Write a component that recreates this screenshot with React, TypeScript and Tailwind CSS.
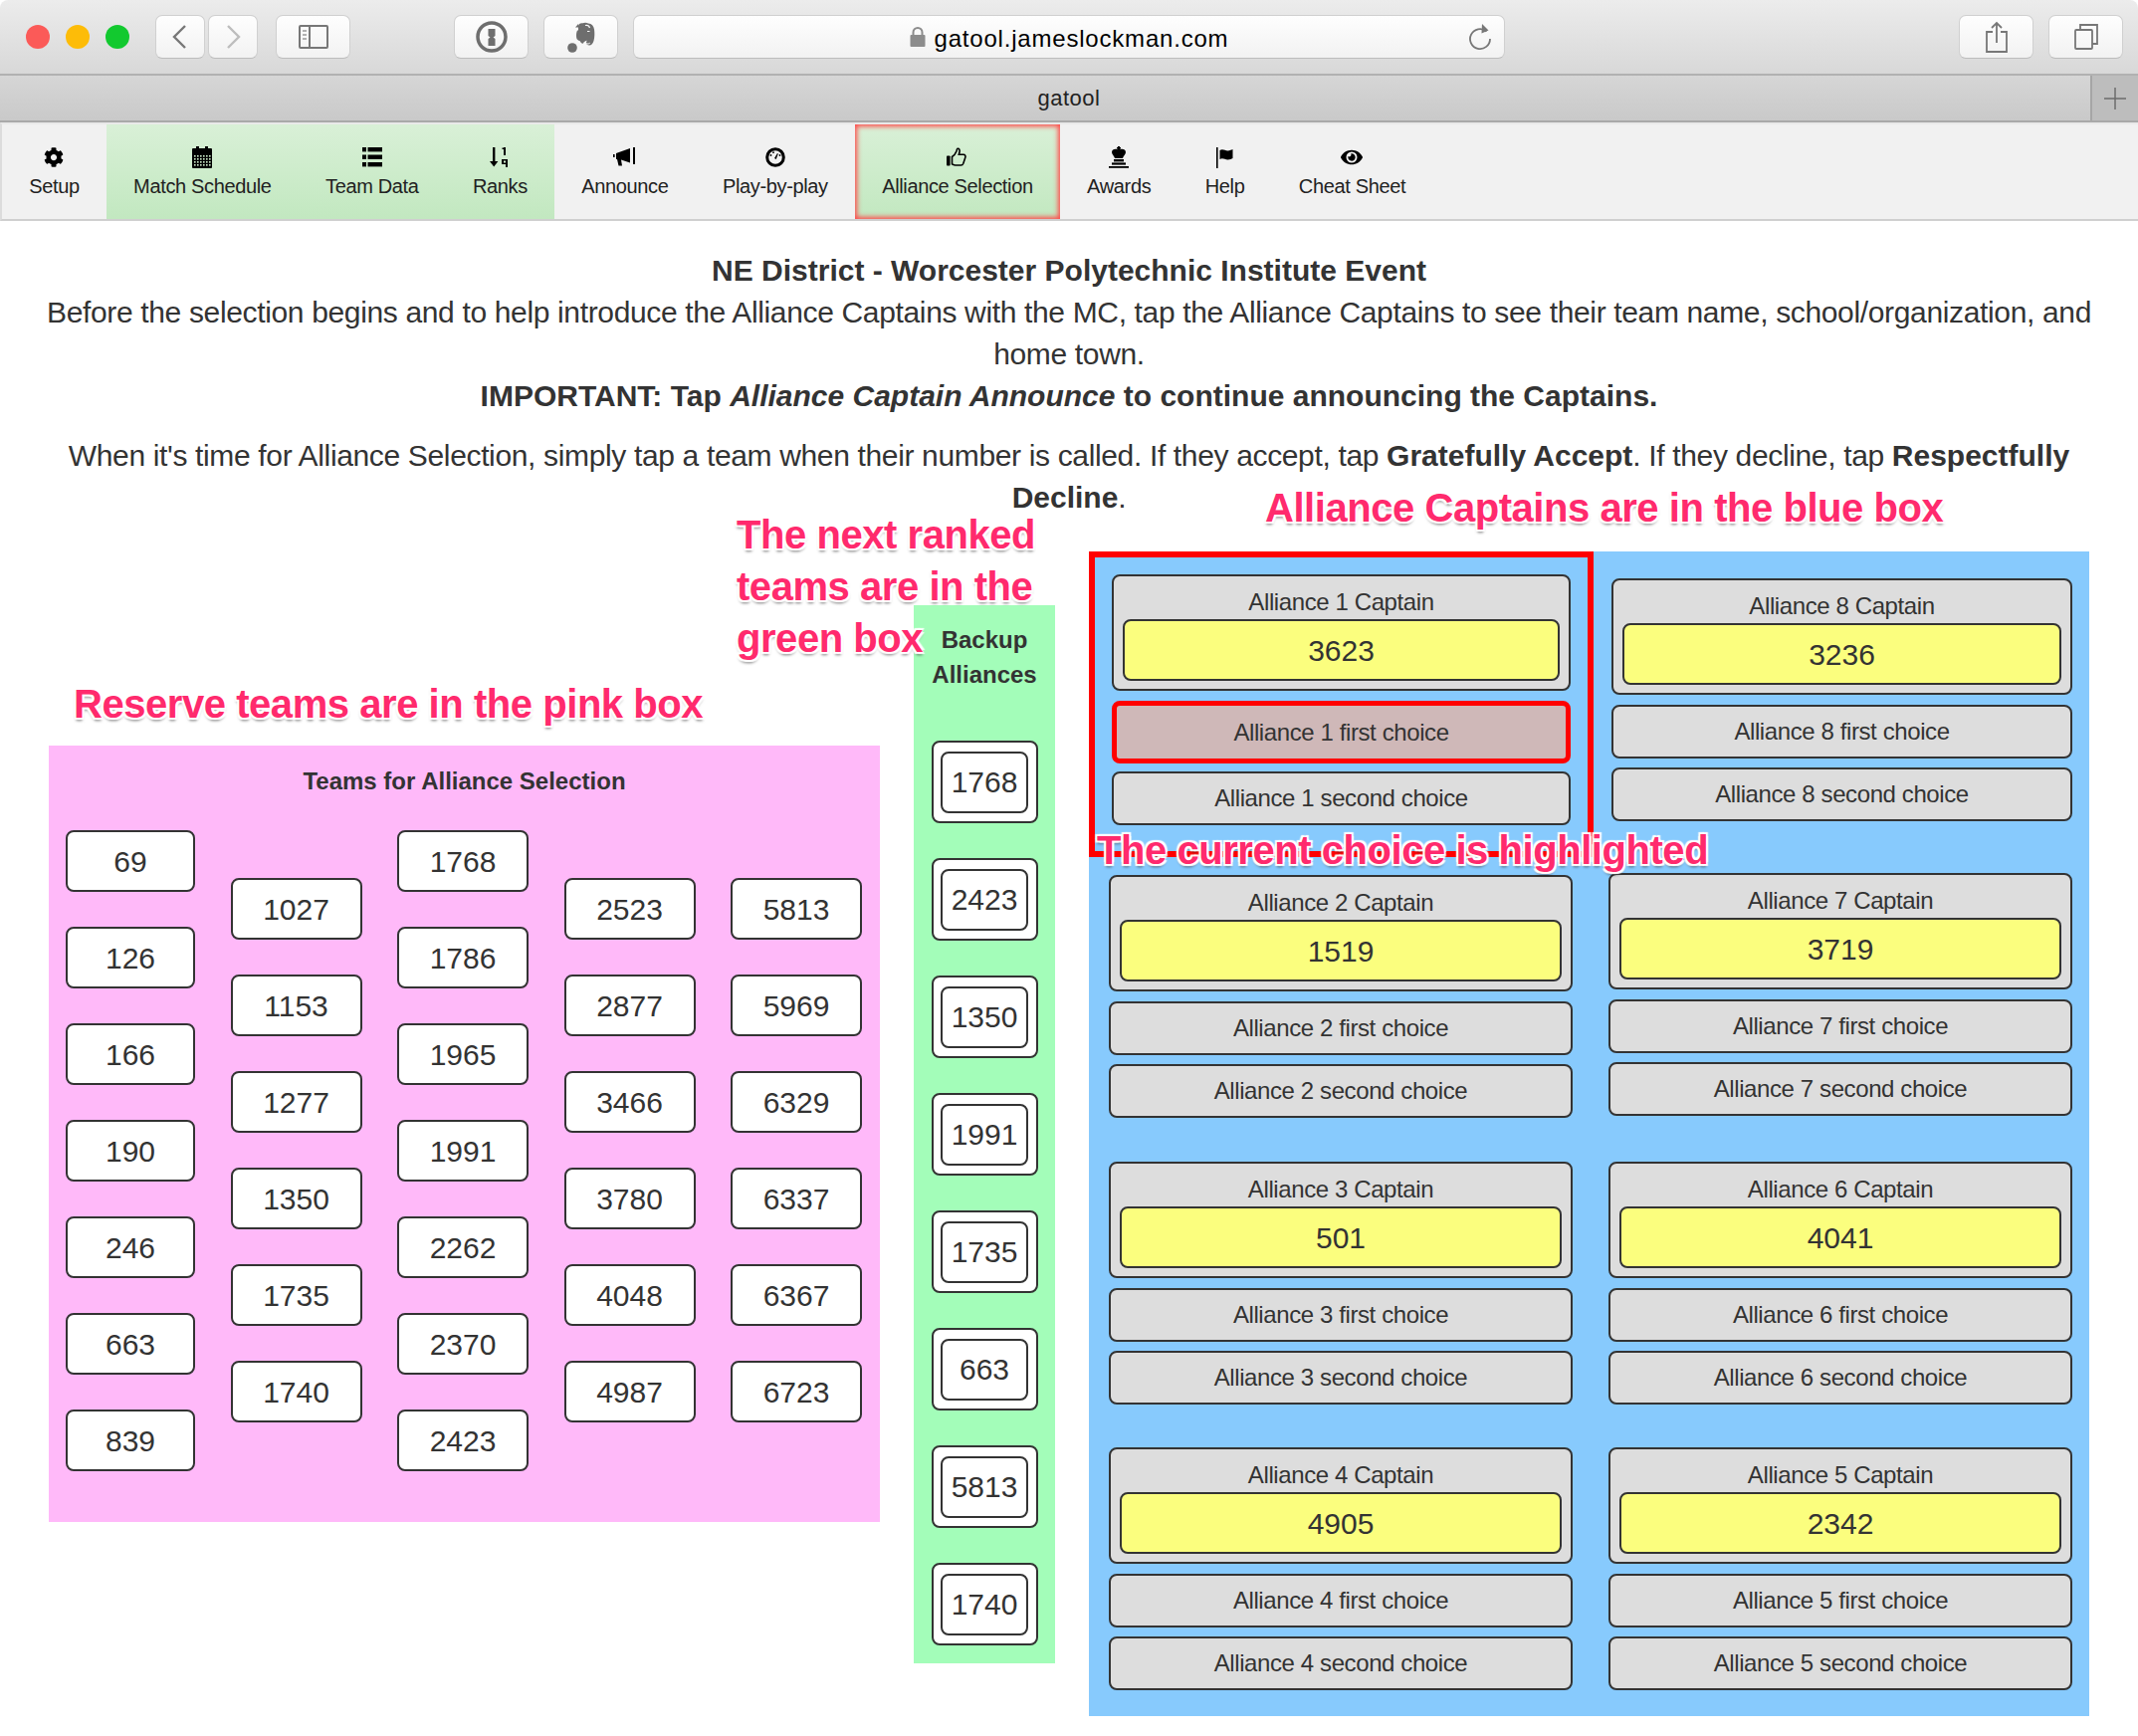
import React from "react";
import { FaCog, FaEye } from "react-icons/fa";

const ink = "#000";

function Calendar() {
  return (
    <svg width="20" height="22" viewBox="0 0 20 22">
      <rect x="4" y="0" width="3" height="4" fill={ink} />
      <rect x="13" y="0" width="3" height="4" fill={ink} />
      <rect x="0" y="2" width="20" height="20" rx="1" fill={ink} />
      {[9, 12, 15, 18].map((y) =>
        [2, 5, 8, 11, 14, 17].map((x) => <rect key={`${x}-${y}`} x={x} y={y} width="1.6" height="1.6" fill="#cfeecc" />)
      )}
    </svg>
  );
}
function ListIcon() {
  return (
    <svg width="20" height="20" viewBox="0 0 20 20" fill={ink}>
      {[0, 7.5, 15].map((y) => (
        <g key={y}>
          <rect x="0" y={y} width="4" height="4.4" />
          <rect x="5.5" y={y} width="14.5" height="4.4" />
        </g>
      ))}
    </svg>
  );
}
function SortIcon() {
  return (
    <svg width="20" height="22" viewBox="0 0 20 22" fill={ink}>
      <rect x="3" y="1" width="2.4" height="16" />
      <path d="M0 15h8.4l-4.2 5.5z" />
      <rect x="14" y="1" width="2" height="8" />
      <rect x="12.5" y="1.5" width="2" height="1.5" />
      <path fillRule="evenodd" d="M12 13h6v8h-2v-3h-4zM14 14.5v2h2v-2z" />
    </svg>
  );
}
function Bullhorn() {
  return (
    <svg width="23" height="20" viewBox="0 0 23 20" fill={ink}>
      <rect x="0" y="7" width="1.6" height="3" />
      <path d="M3 6l14-5v14.5L8 12.5l1 6H5.5L4 12H3z" />
      <rect x="20" y="0" width="2" height="17" />
    </svg>
  );
}
function Dashboard() {
  return (
    <svg width="20" height="20" viewBox="0 0 20 20">
      <circle cx="10" cy="10" r="8.3" fill="none" stroke={ink} strokeWidth="3" />
      <path d="M9 11l3-5 .8 .4-2 5.5z" fill={ink} />
      <circle cx="5.5" cy="8" r=".9" fill={ink} />
      <circle cx="8" cy="5.2" r=".9" fill={ink} />
      <circle cx="14.5" cy="8" r=".9" fill={ink} />
    </svg>
  );
}
function Thumb() {
  return (
    <svg width="21" height="20" viewBox="0 0 21 20">
      <rect x="0" y="8.5" width="3.6" height="10" rx=".8" fill={ink} />
      <path
        d="M5.5 9.5c2-1.2 3.6-3.4 4.4-5.5.4-1.2.4-2.4 1.2-2.7 1.5-.4 2.4 1.4 1.9 3.4l-.7 2.6h4.7c1.7 0 2.4 1.6 1.8 3l-2 6c-.4 1-1.2 1.7-2.4 1.7H9c-1.5 0-2.4-.6-3.5-1.2z"
        fill="none"
        stroke={ink}
        strokeWidth="1.6"
      />
    </svg>
  );
}
function King() {
  return (
    <svg width="20" height="22" viewBox="0 0 20 22" fill={ink}>
      <rect x="9" y="0" width="2" height="4" />
      <rect x="8" y="1" width="4" height="1.6" />
      <path d="M10 4c2-2 7-1.6 7 2 0 2-2.6 4-3 6H6c-.4-2-3-4-3-6 0-3.6 5-4 7-2z" />
      <rect x="5" y="13" width="10" height="2.4" />
      <rect x="3" y="16.4" width="14" height="2.2" />
      <rect x="0" y="20" width="20" height="1.8" />
    </svg>
  );
}
function Flag() {
  return (
    <svg width="18" height="21" viewBox="0 0 18 21" fill={ink}>
      <rect x="0" y="0" width="1.6" height="21" />
      <path d="M3.5 3c3-2 5 .4 8 .4 2.400 0 3.500-1 5-1.400v9c-1.500 .6-2.600 1.500-5 1.500-3 0-5-2.400-8-.5z" />
    </svg>
  );
}

function Lock() {
  return (
    <svg width="16" height="22" viewBox="0 0 16 22" className="shrink-0">
      <path d="M3.500 10V6.500a4.500 4.500 0 0 1 9 0V10" fill="none" stroke="#8c8c8c" strokeWidth="2" />
      <rect x="0.500" y="9" width="15" height="12" rx="1" fill="#8c8c8c" />
    </svg>
  );
}

function Elephant() {
  return (
    <svg width="28" height="32" viewBox="0 0 28 32">
      <circle cx="5" cy="27" r="4.800" fill="#6e6e6e" />
      <path
        d="M11 5.500C11 3 13 2 15.500 2.300c1.500-.8 4-.8 5.500.2 3.500 .3 5.500 2.500 6 6 .5 3.500 .5 8-.5 11.500-.7 2.700-2.200 4.500-4.500 4.500-1.700 0-3-1-3-2.800 0-.9 .4-1.500 1-2-2 .2-3.500 1.200-4.200 3-1.500-.3-2.500-1.200-3.300-2.800-1.500-.2-3-1.200-3.300-3-.4-2.400-.2-5.200 .8-7.400H11z"
        fill="#6e6e6e"
      />
      <path d="M8 6.500l3-3.500v3.500z" fill="#6e6e6e" />
      <path d="M18 4.500c2.500-.5 4 .5 4.500 2.500M20 10.500h2.500" fill="none" stroke="#f4f4f4" strokeWidth="1.200" />
      <path d="M19 22.700c1.200 .5 3 .4 3.800-.6" fill="none" stroke="#f4f4f4" strokeWidth="1" />
    </svg>
  );
}

function ToolBtn({ className, children }: { className: string; children?: React.ReactNode }) {
  return (
    <div
      className={`h-[44px] shrink-0 rounded-[7px] border border-[#d0d0d0] border-b-[#bdbdbd] bg-gradient-to-b from-[#fefefe] to-[#f2f2f2] flex items-center justify-center ${className}`}
    >
      {children}
    </div>
  );
}

function BrowserChrome() {
  return (
    <>
      <div className="h-[76px] rounded-t-[8px] border-b-2 border-[#b1b1b1] bg-gradient-to-b from-[#ececec] to-[#d8d8d8] flex items-center pl-[26px] pb-[1px]">
        <div className="w-6 h-6 rounded-full bg-[#fb5a58]" />
        <div className="w-6 h-6 rounded-full bg-[#fdbc08] ml-[16px]" />
        <div className="w-6 h-6 rounded-full bg-[#12c92f] ml-[16px]" />
        <ToolBtn className="w-[50px] ml-[26px]">
          <svg width="20" height="26" viewBox="0 0 20 26" fill="none" stroke="#777" strokeWidth="2.400">
            <path d="M15 2L4 13l11 11" />
          </svg>
        </ToolBtn>
        <ToolBtn className="w-[50px] ml-[3px]">
          <svg width="20" height="26" viewBox="0 0 20 26" fill="none" stroke="#bdbdbd" strokeWidth="2.400">
            <path d="M5 2l11 11L5 24" />
          </svg>
        </ToolBtn>
        <ToolBtn className="w-[75px] ml-[18px]">
          <svg width="30" height="24" viewBox="0 0 30 24" fill="none" stroke="#777" strokeWidth="2">
            <rect x="1" y="1" width="28" height="22" rx="1" />
            <path d="M11 1v22" />
            <path d="M4 6h4M4 10h4M4 14h4" strokeWidth="1.500" stroke="#999" />
          </svg>
        </ToolBtn>
        <ToolBtn className="w-[75px] ml-[104px]">
          <svg width="32" height="32" viewBox="0 0 32 32">
            <circle cx="16" cy="16" r="14" fill="none" stroke="#6e6e6e" strokeWidth="3.500" />
            <path d="M12.500 8h7v7l-2 1.500 2 1.500v7h-7v-7l2-1.500-2-1.500z" fill="#6e6e6e" />
          </svg>
        </ToolBtn>
        <ToolBtn className="w-[75px] ml-[15px]">
          <Elephant />
        </ToolBtn>
        <ToolBtn className="w-[876px] ml-[15px] relative justify-center gap-[9px]">
          <Lock />
          <span className="text-[24px] leading-[30px] pt-[4px] text-black tracking-[0.8px]">gatool.jameslockman.com</span>
          <svg
            width="26"
            height="28"
            viewBox="0 0 26 28"
            fill="none"
            className="absolute right-[11px] top-[7px]"
            stroke="#777"
            strokeWidth="1.800"
          >
            <path d="M19.500 8.500A10 10 0 1 0 23 16" />
            <path d="M15 1l6.500 6.500-7 3z" fill="#777" stroke="none" />
          </svg>
        </ToolBtn>
        <ToolBtn className="w-[75px] ml-[456px]">
          <svg width="24" height="32" viewBox="0 0 24 32" fill="none" stroke="#777" strokeWidth="1.800">
            <path d="M8 11H2v20h20V11h-6M12 22V2M7 7l5-5 5 5" />
          </svg>
        </ToolBtn>
        <ToolBtn className="w-[75px] ml-[15px]">
          <svg width="24" height="26" viewBox="0 0 24 26" fill="none" stroke="#777" strokeWidth="1.800">
            <rect x="1" y="6" width="17" height="19" rx="1" />
            <path d="M6 6V1h17v19h-5" />
          </svg>
        </ToolBtn>
      </div>
      <div className="h-[47px] border-b-2 border-[#a9a9a9] bg-gradient-to-b from-[#d6d6d6] to-[#c9c9c9] flex">
        <div className="flex-1 flex items-center justify-center text-[22px] tracking-[0.5px] text-[#222] pl-[48px]">gatool</div>
        <div className="w-[48px] border-l-2 border-[#a5a5a5] bg-[#bdbdbd] flex items-center justify-center">
          <svg width="24" height="24" viewBox="0 0 24 24" stroke="#6c6c6c" strokeWidth="1.500">
            <path d="M12 1v22M1 12h22" />
          </svg>
        </div>
      </div>
    </>
  );
}

function NavItem({ icon, label, className = "" }: { icon: React.ReactNode; label: string; className?: string }) {
  return (
    <div className={`flex flex-col items-center px-[27.200px] pt-[21px] ${className}`}>
      <div className="h-[24px] flex items-center justify-center">{icon}</div>
      <div className="mt-[2px] text-[20px] leading-[30px] tracking-[-0.35px] text-[#222] whitespace-nowrap">{label}</div>
    </div>
  );
}

function Nav() {
  return (
    <div className="h-[99px] border-y-2 border-t-[#e9e9e9] border-b-[#cfcfcf] border-l-2 border-l-[#dcdcdc] bg-[#f1f1f1] flex items-stretch">
      <NavItem icon={<FaCog size={20} color={ink} />} label="Setup" />
      <div className="flex bg-gradient-to-b from-[#d9f0d7] to-[#c2e8c0]">
        <NavItem icon={<Calendar />} label="Match Schedule" />
        <NavItem icon={<ListIcon />} label="Team Data" />
        <NavItem icon={<SortIcon />} label="Ranks" />
      </div>
      <NavItem icon={<Bullhorn />} label="Announce" />
      <NavItem icon={<Dashboard />} label="Play-by-play" />
      <NavItem
        icon={<Thumb />}
        label="Alliance Selection"
        className="bg-gradient-to-b from-[#d9f0d7] to-[#c2e8c0] [box-shadow:inset_0_0_5px_2px_#ff4a4a]"
      />
      <NavItem icon={<King />} label="Awards" />
      <NavItem icon={<Flag />} label="Help" />
      <NavItem icon={<FaEye size={22} color={ink} />} label="Cheat Sheet" />
    </div>
  );
}

const reserve: { nums: string[]; className: string }[] = [
  { nums: ["69", "126", "166", "190", "246", "663", "839"], className: "w-[130px]" },
  { nums: ["1027", "1153", "1277", "1350", "1735", "1740"], className: "w-[132px] mt-[48px]" },
  { nums: ["1768", "1786", "1965", "1991", "2262", "2370", "2423"], className: "w-[132px]" },
  { nums: ["2523", "2877", "3466", "3780", "4048", "4987"], className: "w-[132px] mt-[48px]" },
  { nums: ["5813", "5969", "6329", "6337", "6367", "6723"], className: "w-[132px] mt-[48px]" },
];

function Chip({ n, className = "" }: { n: string; className?: string }) {
  return (
    <div className={`h-[62px] rounded-[8px] border-2 border-[#333] bg-white flex items-center justify-center text-[30px] text-[#333] ${className}`}>
      {n}
    </div>
  );
}

function PinkBox() {
  return (
    <div className="w-[835px] h-[780px] mt-[228px] ml-[1px] shrink-0 bg-[#ffb9f9] pt-[19px]">
      <div className="text-center font-bold text-[24px] leading-[34px] text-[#333]">Teams for Alliance Selection</div>
      <div className="flex gap-[35.500px] pl-[17px] mt-[32px]">
        {reserve.map((c, i) => (
          <div key={i} className={`flex flex-col gap-[35px] ${c.className}`}>
            {c.nums.map((n) => (
              <Chip key={n} n={n} />
            ))}
          </div>
        ))}
      </div>
    </div>
  );
}

function GreenBox() {
  return (
    <div className="w-[142px] h-[1063px] mt-[87px] ml-[34px] shrink-0 bg-[#a3fdb9] pt-[17px] flex flex-col items-center">
      <div className="text-center font-bold text-[24px] leading-[35px] text-[#333]">
        Backup
        <br />
        Alliances
      </div>
      <div className="flex flex-col gap-[35px] mt-[49px]">
        {["1768", "2423", "1350", "1991", "1735", "663", "5813", "1740"].map((n) => (
          <div key={n} className="w-[107px] h-[83px] rounded-[8px] border-2 border-[#333] bg-white flex items-center justify-center">
            <Chip n={n} className="w-[88px]" />
          </div>
        ))}
      </div>
    </div>
  );
}

function Group({
  n,
  team,
  className,
  highlight = false,
}: {
  n: number;
  team: string;
  className: string;
  highlight?: boolean;
}) {
  const box =
    "rounded-[8px] border-2 border-[#333] bg-[#ddd] flex items-center justify-center text-[24px] tracking-[-0.4px] text-[#333] h-[54px]";
  return (
    <div className={className}>
      <div className="h-[117px] rounded-[8px] border-2 border-[#333] bg-[#ddd] px-[9px] text-[#333]">
        <div className="h-[43px] pt-[8px] flex items-center justify-center text-[24px] tracking-[-0.4px]">Alliance {n} Captain</div>
        <div className="h-[62px] rounded-[8px] border-2 border-[#333] bg-[#fbfe7e] flex items-center justify-center text-[30px]">{team}</div>
      </div>
      {highlight ? (
        <div className="mt-[10px] h-[63px] rounded-[8px] border-[5px] border-[#ff0000] bg-[#cfb8b8] flex items-center justify-center text-[24px] tracking-[-0.4px] text-[#333]">
          Alliance {n} first choice
        </div>
      ) : (
        <div className={`${box} mt-[9.500px]`}>Alliance {n} first choice</div>
      )}
      <div className={`${box} ${highlight ? "mt-[8px]" : "mt-[9.500px]"}`}>Alliance {n} second choice</div>
    </div>
  );
}

function BlueBox() {
  return (
    <div className="w-[1005px] h-[1170px] mt-[33px] ml-[34px] shrink-0 bg-[#87cafd] flex">
      <div className="w-[466px] ml-[20px]">
        <Group n={1} team="3623" highlight className="mt-[23px] ml-[3px] w-[461px]" />
        <Group n={2} team="1519" className="mt-[50px]" />
        <Group n={3} team="501" className="mt-[44px]" />
        <Group n={4} team="4905" className="mt-[43px]" />
      </div>
      <div className="w-[466px] ml-[36px]">
        <Group n={8} team="3236" className="mt-[27px] ml-[3px] w-[463px]" />
        <Group n={7} team="3719" className="mt-[52px]" />
        <Group n={6} team="4041" className="mt-[46px]" />
        <Group n={5} team="2342" className="mt-[43px]" />
      </div>
    </div>
  );
}

const note =
  "absolute whitespace-nowrap font-bold text-[40px] leading-[52px] tracking-[-0.45px] text-[#ff2a6d] [text-shadow:0_0_1px_#fff,2px_2px_1px_#fff,-2px_-2px_1px_#fff,2px_-2px_1px_#fff,-2px_2px_1px_#fff,0_3px_3px_rgba(0,0,0,0.55)]";

export default function App() {
  return (
    <div className="relative w-[2148px] h-[1744px] overflow-hidden bg-white font-['Liberation_Sans',Arial,sans-serif]">
      <BrowserChrome />
      <Nav />
      <div className="pt-[29px] px-[20px] text-center text-[30px] leading-[42px] text-[#333] tracking-[-0.35px]">
        <div className="font-bold tracking-normal">NE District - Worcester Polytechnic Institute Event</div>
        <div>
          Before the selection begins and to help introduce the Alliance Captains with the MC, tap the Alliance Captains to see their team name, school/organization, and
          <br />
          home town.
        </div>
        <div className="font-bold tracking-normal">
          IMPORTANT: Tap <i>Alliance Captain Announce</i> to continue announcing the Captains.
        </div>
        <div className="mt-[18px]">
          When it's time for Alliance Selection, simply tap a team when their number is called. If they accept, tap <b className="tracking-normal">Gratefully Accept</b>. If they decline, tap <b className="tracking-normal">Respectfully</b>
          <br />
          <b className="tracking-normal">Decline</b>.
        </div>
      </div>
      <div className="flex items-start pl-[48px]">
        <PinkBox />
        <GreenBox />
        <BlueBox />
      </div>
      <div className="absolute left-[1094px] top-[554px] w-[507px] h-[307px] border-[6px] border-[#ff0000]" />
      <div className={`${note} left-[1271px] top-[484px]`}>Alliance Captains are in the blue box</div>
      <div className={`${note} left-[740px] top-[511px]`}>
        The next ranked
        <br />
        teams are in the
        <br />
        green box
      </div>
      <div className={`${note} left-[74px] top-[681px]`}>Reserve teams are in the pink box</div>
      <div className={`${note} left-[1102px] top-[828px]`}>The current choice is highlighted</div>
    </div>
  );
}
